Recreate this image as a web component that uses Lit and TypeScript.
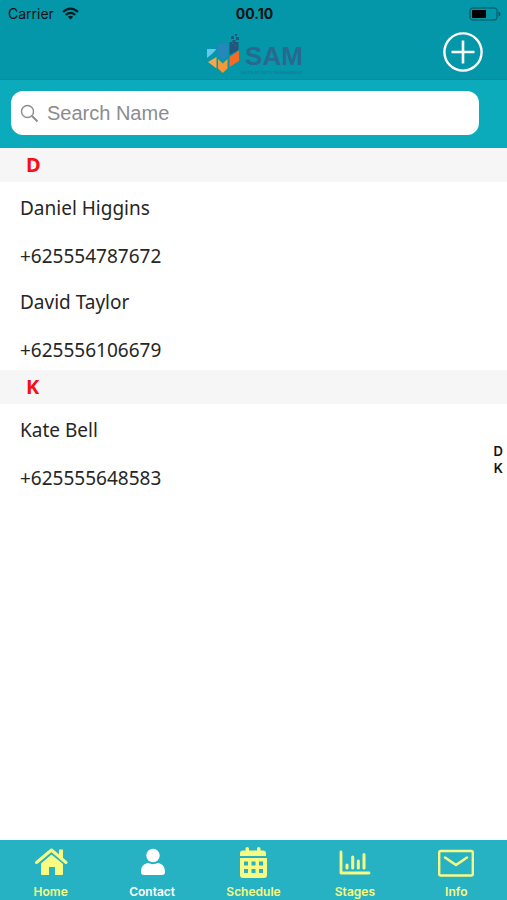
import { LitElement, html, css, svg } from "lit";
import { customElement } from "lit/decorators.js";

interface Contact {
  name: string;
  phone: string;
}

interface Section {
  letter: string;
  contacts: Contact[];
}

const sections: Section[] = [
  {
    letter: "D",
    contacts: [
      { name: "Daniel Higgins", phone: "+625554787672" },
      { name: "David Taylor", phone: "+625556106679" },
    ],
  },
  { letter: "K", contacts: [{ name: "Kate Bell", phone: "+625555648583" }] },
];

const tabs = [
  {
    label: "Home",
    icon: svg`<path d="M3.500 16.500 18.500 4 33 16.500" fill="none" stroke="currentColor" stroke-width="3" stroke-linecap="round" stroke-linejoin="round"/><path d="M26 3.500h4v9.500l-4-3.500z"/><path d="M18.500 8.500 30 18v10q0 1-1 1h-7v-8h-6v8H9q-1 0-1-1V17.500z"/>`,
  },
  {
    label: "Contact",
    icon: svg`<circle cx="19" cy="9.500" r="6.700"/><path d="M7 26c0-5 2-8 7-9 3 1.500 7 1.500 10 0 5 1 7 4 7 9 0 2-1 3-3 3H10c-2 0-3-1-3-3z"/>`,
  },
  {
    label: "Schedule",
    icon: svg`<path d="M5 10V7.500q0-3 3-3h2.500V2.500q0-1.500 1.700-1.500t1.800 1.500v2h8V2.500q0-1.500 1.700-1.500t1.800 1.500v2H28q3 0 3 3V10z"/><path fill-rule="evenodd" d="M5 12h27v17q0 3-3 3H8q-3 0-3-3zM9 15.500v4h4v-4zm7.500 0v4h4v-4zm7.500 0v4h4v-4zM9 23v4h4v-4zm7.500 0v4h4v-4zm7.500 0v4h4v-4z"/>`,
  },
  {
    label: "Stages",
    icon: svg`<path d="M4 6v21h28" fill="none" stroke="currentColor" stroke-width="2.800" stroke-linecap="round" stroke-linejoin="round"/><path d="M10 19v3M15.700 11v11M21.300 15v7M27 8.500v13.500" fill="none" stroke="currentColor" stroke-width="3" stroke-linecap="round"/>`,
  },
  {
    label: "Info",
    icon: svg`<rect x="1.200" y="5" width="33.600" height="24.500" rx="1.500" fill="none" stroke="currentColor" stroke-width="2.400"/><path d="M7 11.500 18 19 29 11.500" fill="none" stroke="currentColor" stroke-width="2.600" stroke-linecap="round" stroke-linejoin="round"/>`,
  },
];

@customElement("app-root")
export class AppRoot extends LitElement {
  static styles = css`
    :host {
      display: flex;
      flex-direction: column;
      min-height: 100vh;
      background: #fff;
      font-family: Inter, "Liberation Sans", sans-serif;
      color: #111;
    }
    * {
      box-sizing: border-box;
    }
    svg {
      display: block;
    }
    .top {
      background: #0397a9;
      border-bottom: 1px solid #078a9b;
    }
    .status {
      display: grid;
      grid-template-columns: 1fr auto 1fr;
      align-items: center;
      height: 27px;
      padding: 0 6px 0 8px;
      font-size: 14px;
    }
    .carrier {
      display: flex;
      align-items: center;
      gap: 8px;
    }
    .time {
      font-weight: 700;
    }
    .battery {
      justify-self: end;
    }
    .nav {
      display: grid;
      grid-template-columns: 1fr auto 1fr;
      align-items: start;
      height: 52px;
      padding: 5px 24px 0;
    }
    .brand {
      grid-column: 2;
      display: flex;
      align-items: flex-start;
    }
    .words {
      display: flex;
      flex-direction: column;
      align-items: flex-end;
      margin-left: -8px;
      padding-top: 9px;
      color: #276a8e;
    }
    .sam {
      font: bold 26px/30px "Liberation Sans", sans-serif;
    }
    .tagline {
      font: bold 4px/4px "Liberation Sans", sans-serif;
      color: #167f99;
    }
    .add {
      grid-column: 3;
      justify-self: end;
      padding: 0;
      border: 0;
      background: none;
      color: #fff;
    }
    .search {
      padding: 11px 28px 13px 11px;
      background: #0cabbb;
    }
    .field {
      display: flex;
      align-items: center;
      gap: 8px;
      height: 44px;
      padding: 0 9px;
      border-radius: 12px;
      background: #fff;
      color: #8c8c8f;
    }
    .field input {
      flex: 1;
      min-width: 0;
      padding: 0;
      border: 0;
      outline: 0;
      background: none;
      font: 20px/24px "Liberation Sans", sans-serif;
      color: #111;
    }
    .field input::placeholder {
      color: #8c8c8f;
      opacity: 1;
    }
    main {
      position: relative;
      flex: 1;
    }
    h2 {
      margin: 0;
      padding: 0 26px;
      background: #f6f6f6;
      font: bold 20px/34px "Noto Sans", sans-serif;
      color: #f90f12;
    }
    ul {
      margin: 0;
      padding: 0;
      list-style: none;
    }
    .contact {
      display: grid;
      gap: 24px;
      padding: 14px 20px 8px;
      font: 19px/24px "Noto Sans", sans-serif;
      color: #262626;
    }
    .index {
      position: absolute;
      right: 4px;
      top: 295px;
      display: grid;
      justify-items: center;
      font-size: 13px;
      line-height: 17px;
      font-weight: 600;
    }
    .index a {
      color: inherit;
      text-decoration: none;
    }
    .tabs {
      display: grid;
      grid-template-columns: repeat(5, 1fr);
      height: 60px;
      background: #27b2c3;
    }
    .tab {
      display: flex;
      flex-direction: column;
      align-items: center;
      gap: 4px;
      padding: 6px 0 0;
      border: 0;
      background: none;
      font: 600 12px/16px Inter, sans-serif;
      color: #f8fb82;
    }
    .tab.active {
      color: #fff;
    }
  `;

  render() {
    return html`
      <header>
        <div class="top">
          <div class="status">
            <div class="carrier">
              <span>Carrier</span>
              <svg width="17" height="13" viewBox="0 0 17 13" aria-hidden="true">
                <g fill="none" stroke="#061c20" stroke-width="2.300">
                  <path d="M1 5Q8.500-1.800 16 5" />
                  <path d="M3.800 8Q8.500 3.800 13.200 8" />
                </g>
                <path d="M5.800 9.800Q8.500 7.800 11.200 9.800L8.500 12.500z" fill="#061c20" />
              </svg>
            </div>
            <span class="time">00.10</span>
            <svg class="battery" width="32" height="14" viewBox="0 0 32 14" aria-hidden="true">
              <rect x="1" y="1" width="27" height="12" rx="2.500" fill="none" stroke="#07505c" />
              <rect x="3" y="3" width="14" height="8" fill="#000" />
              <path d="M29.500 4.500q2 1 2 2.500t-2 2.500z" fill="#07505c" />
            </svg>
          </div>
          <div class="nav">
            <div class="brand">
              <svg width="44" height="42" viewBox="0 0 44 42" aria-hidden="true">
                <path d="M3 17h9.500l-4 4.500L3 26z" fill="#62c8ee" />
                <path d="M14 12h9.500v12l-4.700 4-4.800-4z" fill="#2687bd" />
                <path d="M4 30l8.500-5v11.500z" fill="#f5a74a" />
                <path d="M14 27l4.800 4.500 4.700-4.500v9.500l-4.700 4.500-4.800-4.500z" fill="#f5983a" />
                <path d="M25.500 25l9.500-6.500v10.500l-9.500 6z" fill="#f56a25" />
                <path d="M25.500 10h3V8h3v2h3v8l-9 5z" fill="#22567c" />
                <path d="M27 4h3v3h-3zM31 2h2v2h-2zM32 5h3v3h-3z" fill="#22567c" />
                <path d="M28 11h1v1h-1zM31 13h1v1h-1z" fill="#167f99" />
              </svg>
              <div class="words">
                <span class="sam">SAM</span>
                <span class="tagline">SALES ACTIVITY MANAGEMENT</span>
              </div>
            </div>
            <button class="add" aria-label="Add contact">
              <svg width="40" height="40" viewBox="0 0 40 40" fill="none" stroke="currentColor">
                <circle cx="20" cy="20" r="18.600" stroke-width="2.400" />
                <path d="M8.500 20h23M20 8.500v23" stroke-width="2.600" />
              </svg>
            </button>
          </div>
        </div>
        <div class="search">
          <label class="field">
            <svg width="19" height="19" viewBox="0 0 19 19" fill="none" stroke="currentColor" aria-hidden="true">
              <circle cx="7.500" cy="7.500" r="6" stroke-width="1.400" />
              <path d="M12 12l5.500 5.500" stroke-width="2" />
            </svg>
            <input type="text" placeholder="Search Name" aria-label="Search Name" />
          </label>
        </div>
      </header>
      <main>
        ${sections.map(
          (section) => html`
            <section id=${section.letter}>
              <h2>${section.letter}</h2>
              <ul>
                ${section.contacts.map(
                  (contact) => html`
                    <li class="contact">
                      <span>${contact.name}</span>
                      <span>${contact.phone}</span>
                    </li>
                  `
                )}
              </ul>
            </section>
          `
        )}
        <nav class="index" aria-label="Index">
          ${sections.map((s) => html`<a href="#${s.letter}">${s.letter}</a>`)}
        </nav>
      </main>
      <nav class="tabs" aria-label="Main">
        ${tabs.map(
          (tab) => html`
            <button class="tab ${tab.label === "Contact" ? "active" : ""}">
              <svg width="36" height="34" viewBox="0 0 36 34" fill="currentColor" aria-hidden="true">${tab.icon}</svg>
              <span>${tab.label}</span>
            </button>
          `
        )}
      </nav>
    `;
  }
}
